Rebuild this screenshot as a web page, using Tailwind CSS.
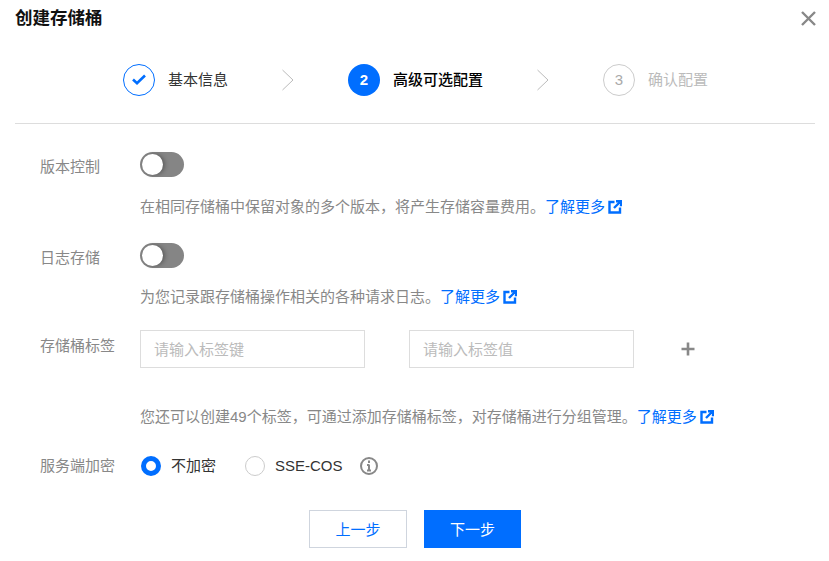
<!DOCTYPE html>
<html lang="zh-CN">
  <head>
    <meta charset="UTF-8" />
    <title>创建存储桶</title>
    <script src="https://cdn.jsdelivr.net/npm/@tailwindcss/browser@4"></script>
  </head>
  <body class="bg-white font-['Liberation_Sans','Noto_Sans_CJK_SC',sans-serif] text-[15px] leading-[20px] text-[#000000e6] w-[829px] h-[561px] overflow-hidden">
    <div class="pl-[15px] pr-[14px]">
      <!-- header -->
      <div class="flex items-center justify-between h-[36px]">
        <h1 class="text-[17.5px] font-bold text-[#111]">创建存储桶</h1>
        <svg class="mr-[-2px]" width="17" height="17" viewBox="0 0 17 17" fill="none" stroke="#888" stroke-width="2.4"><path d="M2 2 15 15M15 2 2 15" /></svg>
      </div>
      <!-- steps -->
      <div class="flex items-center h-[88px] pl-[108px] border-b border-[#ddd]">
        <div class="flex items-center w-[159px]">
          <span class="flex items-center justify-center w-[32px] h-[32px] rounded-full border border-[#006eff]">
            <svg width="14" height="11" viewBox="0 0 14 11" fill="none" stroke="#006eff" stroke-width="2.6"><path d="M1 5.5 5 9.2 13 1.5" /></svg>
          </span>
          <span class="ml-[13px] text-[#333]">基本信息</span>
        </div>
        <svg width="66" height="22" viewBox="0 0 66 22" fill="none" stroke="#bbb"><path d="M0.5 1 11 11 0.5 21" /></svg>
        <div class="flex items-center w-[189px]">
          <span class="flex items-center justify-center w-[32px] h-[32px] rounded-full bg-[#006eff] text-white font-bold">2</span>
          <span class="ml-[13px] font-medium text-black">高级可选配置</span>
        </div>
        <svg width="66" height="22" viewBox="0 0 66 22" fill="none" stroke="#bbb"><path d="M0.5 1 11 11 0.5 21" /></svg>
        <div class="flex items-center">
          <span class="flex items-center justify-center w-[32px] h-[32px] rounded-full border border-[#ccc] text-[#aaa]">3</span>
          <span class="ml-[13px] text-[#bbb]">确认配置</span>
        </div>
      </div>
      <!-- form -->
      <div class="pl-[25px] pt-[28px]">
        <div class="flex h-[25px] items-start">
          <span class="w-[100px] text-[#888] mt-[5px]">版本控制</span>
          <span class="flex items-center w-[44px] h-[25px] rounded-full bg-[#858585] pl-[2px]"><span class="w-[21px] h-[21px] rounded-full bg-white shadow-[2px_0_4px_#0000004d]"></span></span>
        </div>
        <p class="ml-[100px] mt-[20px] text-[#888] flex items-center">在相同存储桶中保留对象的多个版本，将产生存储容量费用。<span class="text-[#006eff]">了解更多</span>
          <svg class="ml-[3px]" width="14" height="14" viewBox="0 0 14 14" fill="none" stroke="#006eff" stroke-width="2.4"><path d="M6.5 2H1.5V12.5H12V7.5M6 8 12 2M8 1.2H13V6.2" /></svg>
        </p>
        <div class="flex h-[25px] items-start mt-[26px]">
          <span class="w-[100px] text-[#888] mt-[5px]">日志存储</span>
          <span class="flex items-center w-[44px] h-[25px] rounded-full bg-[#858585] pl-[2px]"><span class="w-[21px] h-[21px] rounded-full bg-white shadow-[2px_0_4px_#0000004d]"></span></span>
        </div>
        <p class="ml-[100px] mt-[19px] text-[#888] flex items-center">为您记录跟存储桶操作相关的各种请求日志。<span class="text-[#006eff]">了解更多</span>
          <svg class="ml-[3px]" width="14" height="14" viewBox="0 0 14 14" fill="none" stroke="#006eff" stroke-width="2.4"><path d="M6.5 2H1.5V12.5H12V7.5M6 8 12 2M8 1.2H13V6.2" /></svg>
        </p>
        <div class="flex items-start mt-[23px]">
          <span class="w-[100px] text-[#888] mt-[6px]">存储桶标签</span>
          <input class="w-[225px] h-[38px] border border-[#ddd] px-[13px] outline-none placeholder:text-[#bbb]" placeholder="请输入标签键" />
          <input class="w-[225px] h-[38px] border border-[#ddd] px-[13px] outline-none ml-[44px] placeholder:text-[#bbb]" placeholder="请输入标签值" />
          <svg class="ml-[47px] mt-[12px]" width="14" height="14" viewBox="0 0 14 14" fill="none" stroke="#888" stroke-width="2.6"><path d="M7 0.5V13.5M0.5 7H13.5" /></svg>
        </div>
        <p class="ml-[100px] mt-[39px] text-[#888] flex items-center">您还可以创建49个标签，可通过添加存储桶标签，对存储桶进行分组管理。<span class="text-[#006eff]">了解更多</span>
          <svg class="ml-[3px]" width="14" height="14" viewBox="0 0 14 14" fill="none" stroke="#006eff" stroke-width="2.4"><path d="M6.5 2H1.5V12.5H12V7.5M6 8 12 2M8 1.2H13V6.2" /></svg>
        </p>
        <div class="flex items-center mt-[29px] h-[20px]">
          <span class="w-[101px] text-[#888]">服务端加密</span>
          <span class="w-[20px] h-[20px] rounded-full border-[5px] border-[#006eff]"></span>
          <span class="ml-[10px] text-[#333]">不加密</span>
          <span class="ml-[29px] w-[20px] h-[20px] rounded-full border border-[#ccc]"></span>
          <span class="ml-[10px] text-[#333]">SSE-COS</span>
          <svg class="ml-[17px]" width="18" height="18" viewBox="0 0 18 18" fill="none"><circle cx="9" cy="9" r="8" stroke="#888" stroke-width="2" /><path d="M9 3.6V6M9 7.4V13.5M7 8H9M7 13.5H11" stroke="#888" stroke-width="2" /></svg>
        </div>
      </div>
      <!-- buttons -->
      <div class="flex justify-center gap-[17px] mt-[34px]">
        <button class="w-[98px] h-[38px] pt-[2px] border border-[#cfd5de] text-[#006eff]">上一步</button>
        <button class="w-[97px] h-[38px] pt-[2px] bg-[#006eff] text-white">下一步</button>
      </div>
    </div>
  </body>
</html>
